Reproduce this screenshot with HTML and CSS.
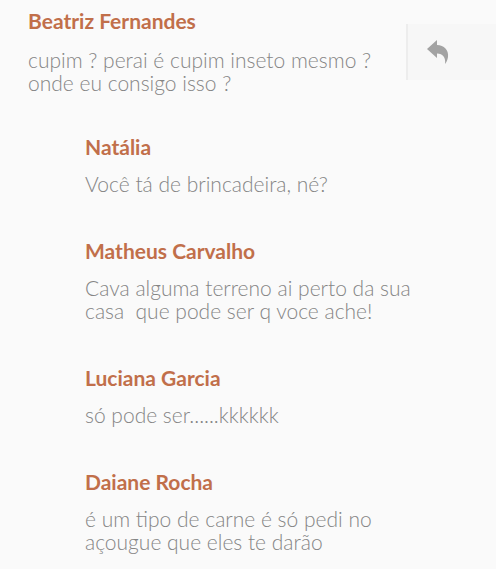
FILE: index.html
```html
<!DOCTYPE html>
<html lang="pt-BR">
<head>
<meta charset="utf-8">
<link rel="stylesheet" href="styles.css">
</head>
<body>
<div class="thread">
  <div class="comment">
    <div class="body">
      <div class="name">Beatriz Fernandes</div>
      <div class="text first">cupim ? perai é cupim inseto mesmo ?<br>onde eu consigo isso ?</div>
    </div>
    <div class="action">
      <svg class="reply-icon" viewBox="0 0 22 24" width="22" height="24"><path d="M0 9 L10 0 V5 C17 5 22 10 21 17 C20.5 20 19.5 22 18 24 C19 18 16 13.5 10 13.5 V18 Z" fill="#a3a3a3"/></svg>
    </div>
  </div>
  <div class="replies">
    <div class="reply">
      <div class="name">Natália</div>
      <div class="text">Você tá de brincadeira, né?</div>
    </div>
    <div class="reply">
      <div class="name">Matheus Carvalho</div>
      <div class="text">Cava alguma terreno ai perto da sua<br>casa&nbsp; que pode ser q voce ache!</div>
    </div>
    <div class="reply">
      <div class="name">Luciana Garcia</div>
      <div class="text">só pode ser......kkkkkk</div>
    </div>
    <div class="reply">
      <div class="name">Daiane Rocha</div>
      <div class="text">é um tipo de carne é só pedi no<br>açougue que eles te darão</div>
    </div>
  </div>
</div>
</body>
</html>
```
FILE: styles.css
```css
html, body {
  margin: 0;
  padding: 0;
  background: #fafafa;
}
body {
  font-family: Lato, "Noto Sans", sans-serif;
  width: 496px;
  height: 569px;
  overflow: hidden;
}
.thread {
  display: flex;
  flex-direction: column;
}
.comment {
  display: flex;
  align-items: flex-start;
  padding: 10px 0 0 28px;
}
.body {
  flex: 1;
}
.name {
  font-size: 21px;
  line-height: 22px;
  font-weight: 700;
  color: #c16f4a;
}
.text {
  font-size: 21px;
  line-height: 23px;
  font-weight: 300;
  color: #858585;
  margin-top: 14px;
}
.text.first {
  margin-top: 16px;
}
.action {
  width: 90px;
  height: 56px;
  margin-top: 14px;
  border-left: 2px solid #ededed;
  padding: 16px 0 0 19px;
  box-sizing: border-box;
  background: #f7f7f7;
}
.reply-icon {
  display: block;
}
.replies {
  display: flex;
  flex-direction: column;
  padding-left: 85px;
  padding-top: 42px;
  gap: 45px;
}
```
